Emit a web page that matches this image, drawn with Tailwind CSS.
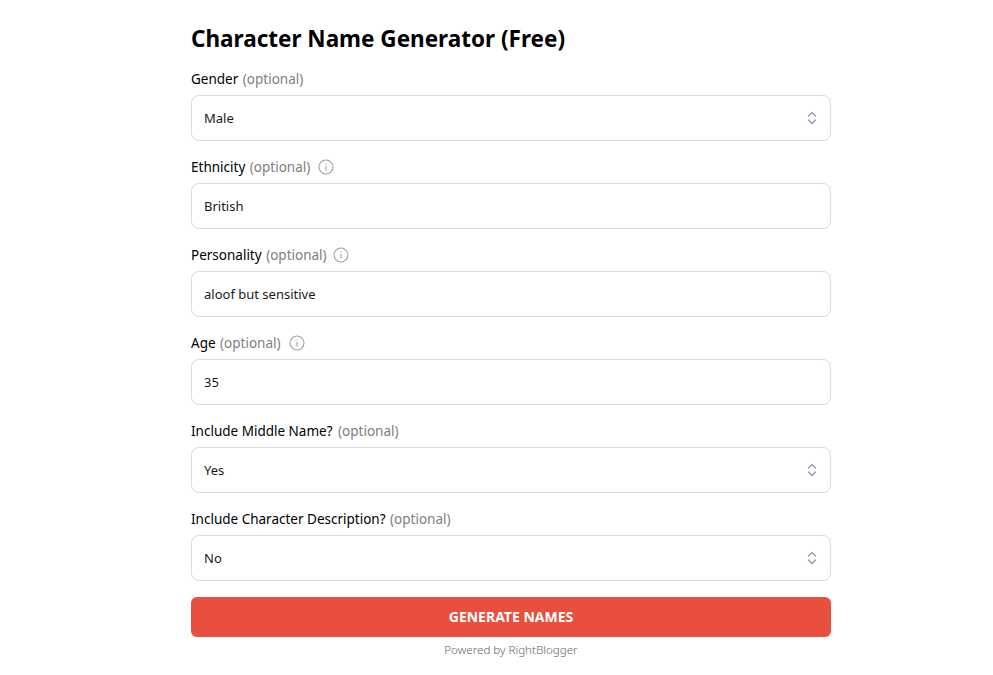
<!DOCTYPE html>
<html lang="en">
<head>
    <meta charset="UTF-8">
    <title>Character Name Generator (Free)</title>
    <script src="https://cdn.jsdelivr.net/npm/@tailwindcss/browser@4"></script>
</head>
<body class="bg-white font-['Noto_Sans',sans-serif] text-black">
    <main class="w-[640px] ml-[191px] pt-[23px]">
        <h1 class="text-[22.5px] leading-8 font-bold mb-[14px]">Character Name Generator (Free)</h1>

        <form class="flex flex-col gap-4">
            <!-- Gender -->
            <div>
                <label class="flex items-center h-5 mb-[6px] text-[13.5px]"><span>Gender <span class="ml-px text-[#808080]">(optional)</span></span></label>
                <div class="flex items-center justify-between h-[46px] px-3 border border-[#dcdcdc] rounded-lg text-[13px] text-[#1a1a1a]">
                    <span class="mt-[2px]">Male</span>
                    <svg class="w-4 h-4 -mr-[2px] text-[#8a94a6]" viewBox="0 0 16 16" fill="none" stroke="currentColor" stroke-width="1.2" stroke-linecap="round" stroke-linejoin="round"><path d="M4.5 6L8 2.5 11.5 6M4.5 10L8 13.5 11.5 10"/></svg>
                </div>
            </div>
            <!-- Ethnicity -->
            <div>
                <label class="flex items-center h-5 mb-[6px] text-[13.5px]"><span>Ethnicity <span class="ml-px text-[#808080]">(optional)</span></span>
                    <svg class="w-4 h-4 ml-2 text-[#a0a0a0]" viewBox="0 0 16 16" fill="none" stroke="currentColor" stroke-width="1.1"><circle cx="8" cy="8" r="7"/><path d="M8 7v4.5M8 4.5v1"/></svg>
                </label>
                <div class="flex items-center h-[46px] px-3 border border-[#dcdcdc] rounded-lg text-[13px] text-[#1a1a1a]"><span class="mt-[2px]">British</span></div>
            </div>
            <!-- Personality -->
            <div>
                <label class="flex items-center h-5 mb-[6px] text-[13.5px]"><span>Personality <span class="ml-px text-[#808080]">(optional)</span></span>
                    <svg class="w-4 h-4 ml-[6px] text-[#a0a0a0]" viewBox="0 0 16 16" fill="none" stroke="currentColor" stroke-width="1.1"><circle cx="8" cy="8" r="7"/><path d="M8 7v4.5M8 4.5v1"/></svg>
                </label>
                <div class="flex items-center h-[46px] px-3 border border-[#dcdcdc] rounded-lg text-[13px] text-[#1a1a1a]"><span class="mt-[2px]">aloof but sensitive</span></div>
            </div>
            <!-- Age -->
            <div>
                <label class="flex items-center h-5 mb-[6px] text-[13.5px]"><span>Age <span class="ml-px text-[#808080]">(optional)</span></span>
                    <svg class="w-4 h-4 ml-2 text-[#a0a0a0]" viewBox="0 0 16 16" fill="none" stroke="currentColor" stroke-width="1.1"><circle cx="8" cy="8" r="7"/><path d="M8 7v4.5M8 4.5v1"/></svg>
                </label>
                <div class="flex items-center h-[46px] px-3 border border-[#dcdcdc] rounded-lg text-[13px] text-[#1a1a1a]"><span class="mt-[2px]">35</span></div>
            </div>
            <!-- Middle name -->
            <div>
                <label class="flex items-center h-5 mb-[6px] text-[13.5px]"><span>Include Middle Name? <span class="ml-[2px] text-[#808080]">(optional)</span></span></label>
                <div class="flex items-center justify-between h-[46px] px-3 border border-[#dcdcdc] rounded-lg text-[13px] text-[#1a1a1a]">
                    <span class="mt-[2px]">Yes</span>
                    <svg class="w-4 h-4 -mr-[2px] text-[#8a94a6]" viewBox="0 0 16 16" fill="none" stroke="currentColor" stroke-width="1.2" stroke-linecap="round" stroke-linejoin="round"><path d="M4.5 6L8 2.5 11.5 6M4.5 10L8 13.5 11.5 10"/></svg>
                </div>
            </div>
            <!-- Description -->
            <div>
                <label class="flex items-center h-5 mb-[6px] text-[13.5px]"><span>Include Character Description? <span class="ml-px text-[#808080]">(optional)</span></span></label>
                <div class="flex items-center justify-between h-[46px] px-3 border border-[#dcdcdc] rounded-lg text-[13px] text-[#1a1a1a]">
                    <span class="mt-[2px]">No</span>
                    <svg class="w-4 h-4 -mr-[2px] text-[#8a94a6]" viewBox="0 0 16 16" fill="none" stroke="currentColor" stroke-width="1.2" stroke-linecap="round" stroke-linejoin="round"><path d="M4.5 6L8 2.5 11.5 6M4.5 10L8 13.5 11.5 10"/></svg>
                </div>
            </div>
            <button type="button" class="h-10 w-full rounded-md bg-[#e84f3d] text-white text-sm font-bold">GENERATE NAMES</button>
        </form>
        <p class="mt-[3px] text-center text-[11.6px] leading-5 font-light text-[#666666]">Powered by RightBlogger</p>
    </main>
</body>
</html>
